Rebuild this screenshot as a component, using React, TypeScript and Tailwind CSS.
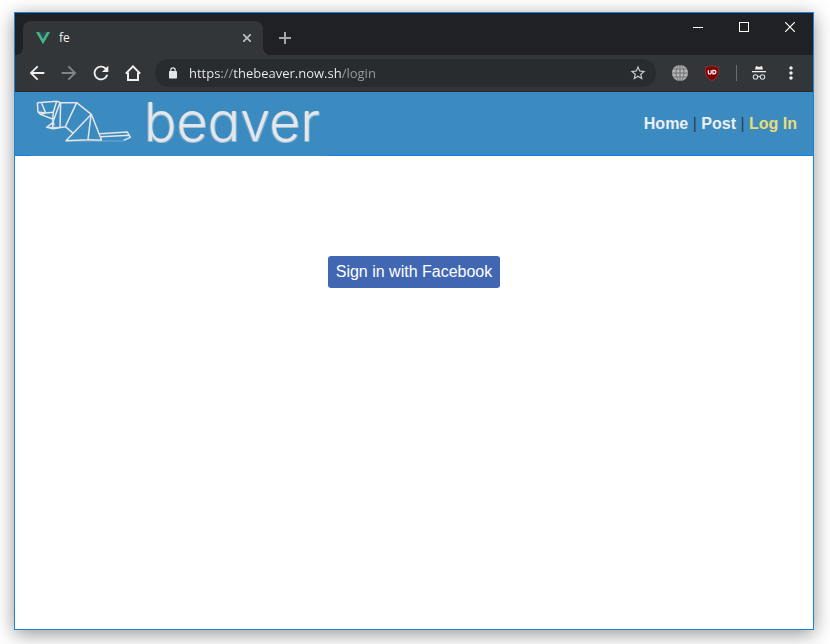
import React from "react";
import {
  MdArrowBack,
  MdArrowForward,
  MdRefresh,
  MdStarBorder,
  MdMoreVert,
} from "react-icons/md";

const toolButton = "flex h-8 w-8 shrink-0 items-center justify-center text-[#f1f1f2]";
const windowButton = "flex h-7 w-[46px] items-center justify-center text-white";

function VueIcon() {
  return (
    <svg className="h-4 w-4" viewBox="0 0 16 16" aria-hidden="true">
      <path d="M1 2h3.2L8 8.8 11.8 2H15L8 14.2z" fill="#41b883" />
      <path d="M4.2 2h2.4L8 4.5 9.4 2h2.4L8 8.8z" fill="#35495e" />
    </svg>
  );
}

function LockIcon() {
  return (
    <svg className="h-3 w-2.5 shrink-0" viewBox="0 0 10 12" aria-hidden="true">
      <rect x="1" y="4" width="8" height="7.500" rx="0.8" fill="#e3e5e8" />
      <path d="M2.800 4.500V3a2.200 2.200 0 0 1 4.400 0v1.500" fill="none" stroke="#e3e5e8" strokeWidth="1.200" />
    </svg>
  );
}

function GlobeIcon() {
  return (
    <svg className="h-4 w-4" viewBox="0 0 16 16" aria-hidden="true">
      <circle cx="8" cy="8" r="8" fill="#b4b5b6" />
      <g fill="none" stroke="#696b6d" strokeWidth="0.9">
        <path d="M8 0v16M0 8h16M1.5 4h13M1.5 12h13" />
        <ellipse cx="8" cy="8" rx="4" ry="8" />
      </g>
    </svg>
  );
}

function ShieldIcon() {
  return (
    <svg className="h-4 w-4" viewBox="0 0 16 16" aria-hidden="true">
      <path
        d="M8 .4C6 1.7 3.600 2.200 1.200 2.200c0 6 .5 10.500 6.800 13.400 6.300-2.900 6.800-7.400 6.800-13.400C12.400 2.200 10 1.700 8 .4z"
        fill="#800000"
        stroke="#a33b3b"
        strokeWidth="0.7"
      />
      <path
        d="M4.300 5.300v2.400c0 1.700 2.900 1.700 2.900 0V5.300M8.900 5.300v3.600h1.200c2.400 0 2.400-3.600 0-3.600z"
        fill="none"
        stroke="#fff"
        strokeWidth="1.2"
      />
    </svg>
  );
}

function IncognitoIcon() {
  return (
    <svg className="h-4 w-4" viewBox="0 0 16 16" aria-hidden="true">
      <path d="M5 1l3 .9L11 1l1 3.400H4zM1 6h14v1.300H1z" fill="#f1f1f2" />
      <g fill="none" stroke="#d6d7d8" strokeWidth="1.100">
        <circle cx="4.500" cy="12" r="2.200" />
        <circle cx="11.500" cy="12" r="2.200" />
        <path d="M6.700 11.700q1.300-.8 2.600 0" />
      </g>
    </svg>
  );
}

function BeaverDrawing() {
  return (
    <svg
      className="h-[60px] w-[114px] shrink-0"
      viewBox="0 6 342 180"
      fill="none"
      stroke="#e4e6e9"
      strokeWidth="4.500"
      strokeLinejoin="round"
      aria-hidden="true"
    >
      <path d="M22 38L80 34L92 38L140 38L184 73L215 151" />
      <path d="M22 38L24 66L31 73L68 87L72 106M24 66L47 69L70 67M35 40L47 69L31 73" />
      <path d="M80 34L70 67L68 87M90 38L68 98L50 112L70 116L106 110L140 38M92 38L90 112M68 98L68 116" />
      <path d="M50 112H90" strokeWidth="3" />
      <path d="M106 110L130 130M184 73L108 152L174 149L183 75" />
      <path d="M174 149L215 151M209 131L292 126L301 142L281 151M211 140L299 136" />
      <path d="M108 153L281 153" strokeWidth="2" opacity="0.5" />
    </svg>
  );
}

function TabStrip() {
  return (
    <div className="flex h-[42px] items-start bg-[#202124] pl-2">
      <div className="relative mt-2 flex h-[34px] w-60 items-center rounded-t-lg bg-[#323639] pr-2 pl-3">
        <span className="absolute bottom-0 -left-2 h-2 w-2 bg-[radial-gradient(circle_at_0_0,#202124_8px,#323639_8px)]" />
        <span className="absolute -right-2 bottom-0 h-2 w-2 bg-[radial-gradient(circle_at_100%_0,#202124_8px,#323639_8px)]" />
        <VueIcon />
        <span className="ml-2 flex-1 font-['Open_Sans','Noto_Sans',sans-serif] text-xs text-[#f1f3f4]">fe</span>
        <button type="button" aria-label="Close tab" className="flex h-4 w-4 items-center justify-center text-[#bdc1c6]">
          <svg className="h-2 w-2" viewBox="0 0 8 8" stroke="currentColor" strokeWidth="1.600">
            <path d="M0 0l8 8M8 0L0 8" />
          </svg>
        </button>
      </div>
      <button type="button" aria-label="New tab" className="mt-[11px] ml-2 flex h-7 w-7 items-center justify-center text-[#a5a9ad]">
        <svg className="h-3 w-3" viewBox="0 0 12 12" stroke="currentColor" strokeWidth="2">
          <path d="M6 0v12M0 6h12" />
        </svg>
      </button>
      <div className="ml-auto flex">
        <button type="button" aria-label="Minimize" className={windowButton}>
          <span className="h-px w-2.5 bg-white" />
        </button>
        <button type="button" aria-label="Maximize" className={windowButton}>
          <span className="h-2.5 w-2.5 border border-white" />
        </button>
        <button type="button" aria-label="Close" className={windowButton}>
          <svg className="h-2.5 w-2.5" viewBox="0 0 10 10" stroke="currentColor" strokeWidth="1.200">
            <path d="M0 0l10 10M10 0L0 10" />
          </svg>
        </button>
      </div>
    </div>
  );
}

function Toolbar() {
  return (
    <div className="flex h-[37px] items-center border-b border-[#27292b] bg-[#323639] px-1.5">
      <button type="button" aria-label="Back" className={toolButton}>
        <MdArrowBack className="h-[22px] w-[22px]" />
      </button>
      <button type="button" aria-label="Forward" className="flex h-8 w-8 shrink-0 items-center justify-center text-[#84878a]">
        <MdArrowForward className="h-[22px] w-[22px]" />
      </button>
      <button type="button" aria-label="Reload" className={toolButton}>
        <MdRefresh className="h-[22px] w-[22px]" />
      </button>
      <button type="button" aria-label="Home page" className={toolButton}>
        <svg className="h-4 w-4" viewBox="0 0 16 16" fill="none" stroke="currentColor" strokeWidth="2">
          <path d="M.8 8.600L8 1.400l7.200 7.200M3 7.500V15h10V7.500" />
        </svg>
      </button>
      <div className="mx-1.5 mr-2 flex h-7 min-w-0 flex-1 items-center rounded-full bg-[#282c2f] pr-[9px] pl-[13px]">
        <LockIcon />
        <input
          type="text"
          aria-label="Address"
          defaultValue="https://thebeaver.now.sh/login"
          className="ml-[11px] min-w-0 flex-1 bg-[linear-gradient(90deg,#f1f3f4_33px,#9aa0a6_33px,#9aa0a6_45px,#f1f3f4_45px,#f1f3f4_153px,#9aa0a6_153px)] bg-clip-text pt-0.5 font-['Open_Sans','Noto_Sans',sans-serif] text-[13px] text-transparent outline-none"
        />
        <button type="button" aria-label="Bookmark this page" className="text-[#c5c8cb]">
          <MdStarBorder className="h-[18px] w-[18px]" />
        </button>
      </div>
      <button type="button" aria-label="Site language" className={toolButton}>
        <GlobeIcon />
      </button>
      <button type="button" aria-label="Content blocker" className={toolButton}>
        <ShieldIcon />
      </button>
      <span className="mr-1.5 ml-2 h-4 w-px bg-[#6b6e71]" />
      <button type="button" aria-label="Incognito" className={toolButton}>
        <IncognitoIcon />
      </button>
      <button type="button" aria-label="Menu" className={toolButton}>
        <MdMoreVert className="h-5 w-5" />
      </button>
    </div>
  );
}

function SiteHeader() {
  return (
    <header className="flex h-16 justify-between border-b border-[#0a7ffa] bg-[#3b8ac0] pr-4 pl-[15px]">
      <a href="#home" className="-mb-px flex w-[297px] items-start bg-[#3b8ac0]">
        <BeaverDrawing />
        <span className="font-['Inter',sans-serif] text-[54px] leading-[60px] font-light text-[#e4e6e9] [font-feature-settings:'cv11','ss01'] [text-shadow:1px_1px_0_#e4e6e966,-1px_1px_0_#e4e6e94d]">
          beaver
        </span>
      </a>
      <nav className="self-center text-base text-[#2c3e50]">
        <a href="#home" className="font-bold text-[#eceff1]">Home</a>
        {" | "}
        <a href="#post" className="font-bold text-[#eceff1]">Post</a>
        {" | "}
        <a href="#login" className="font-bold text-[#e9dc78]">Log In</a>
      </nav>
    </header>
  );
}

export default function App() {
  return (
    <div className="flex min-h-screen bg-white pt-3 pr-4 pb-3.5 pl-3.5 font-['Liberation_Sans',Arial,sans-serif]">
      <div className="flex min-w-0 flex-1 flex-col border border-[#1883d7] bg-white shadow-[0_4px_18px_rgba(0,0,0,0.42)]">
        <TabStrip />
        <Toolbar />
        <SiteHeader />
        <main className="flex flex-1 justify-center pt-[100px]">
          <button type="button" className="h-8 self-start rounded-[3px] bg-[#4267b2] px-2 text-base text-white">
            Sign in with Facebook
          </button>
        </main>
      </div>
    </div>
  );
}
